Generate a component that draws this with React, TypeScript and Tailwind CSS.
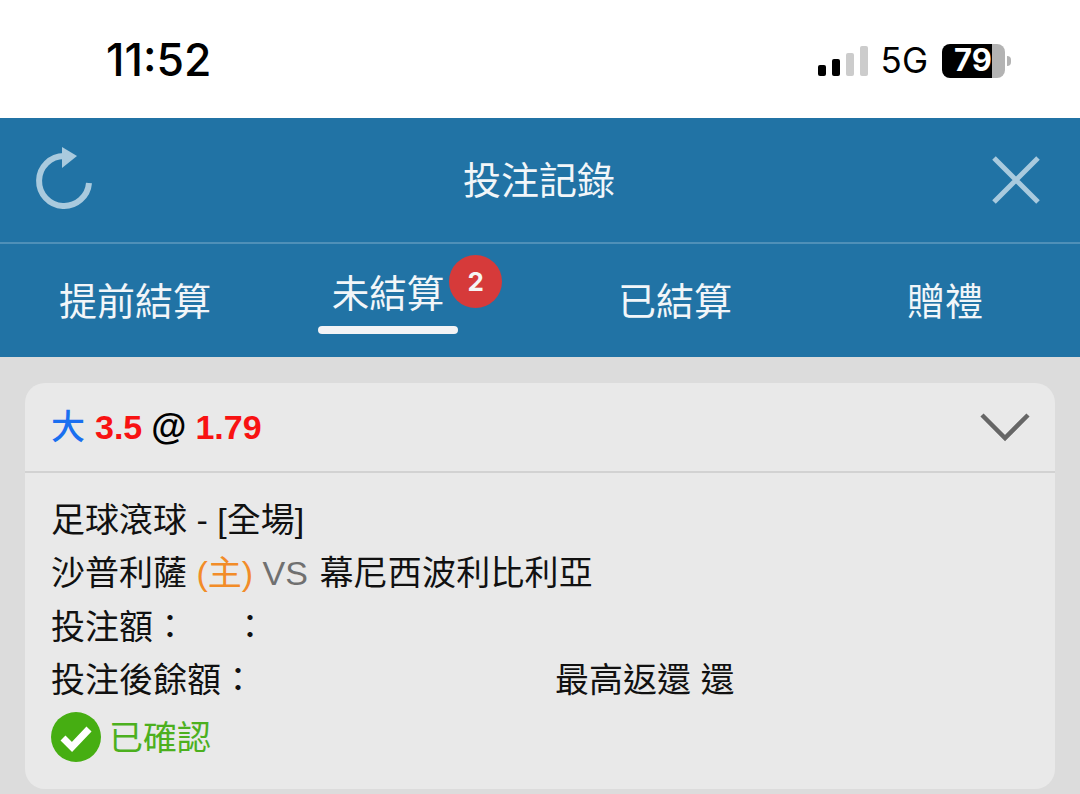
import React from 'react';

const tabs = ['提前結算', '未結算', '已結算', '贈禮'];

const SignalBars = () => (
  <div className="flex items-end gap-[6px] h-[30px]">
    <div className="w-[8px] h-[11px] rounded-[2px] bg-black" />
    <div className="w-[8px] h-[17px] rounded-[2px] bg-black" />
    <div className="w-[8px] h-[23px] rounded-[2px] bg-[#cccccc]" />
    <div className="w-[8px] h-[30px] rounded-[2px] bg-[#cccccc]" />
  </div>
);

const Battery = () => (
  <div className="flex items-center">
    <div className="relative flex w-[63px] h-[34px]">
      <div className="w-[50px] h-full rounded-l-[8px] bg-black" />
      <div className="w-[13px] h-full rounded-r-[8px] bg-[#b3b3b3]" />
      <span className="absolute left-[12px] top-0 h-full flex items-center font-['Inter',sans-serif] text-[31px] font-bold text-white">
        79
      </span>
    </div>
    <div className="ml-[2px] w-[4px] h-[10px] rounded-r-full bg-[#b3b3b3]" />
  </div>
);

export default function App() {
  return (
    <div className="w-[1080px] h-[794px] overflow-hidden bg-[#dcdcdc] font-['Inter','Noto_Sans_CJK_TC',sans-serif]">
      {/* Status bar */}
      <div className="h-[118px] bg-white flex items-center justify-between pl-[106px] pr-[69px] pt-[3px]">
        <span className="text-[44.5px] font-medium text-black">11:52</span>
        <div className="flex items-center">
          <SignalBars />
          <span className="ml-[13px] mr-[14px] text-[35px] text-black">5G</span>
          <Battery />
        </div>
      </div>

      {/* Header */}
      <div className="h-[126px] bg-[#2173a5] border-b-2 border-[#4f90b8] flex items-center justify-between pl-[34px] pr-[40px]">
        <svg width="60" height="66" viewBox="0 0 60 66" fill="none">
          <path d="M30 9 A25 25 0 1 0 55 36" stroke="#a9cade" strokeWidth="6" />
          <path d="M28 0 L43 9 L28 21 Z" fill="#a9cade" />
        </svg>
        <span className="text-[38px] text-[#f2f6f9]">投注記錄</span>
        <div className="w-[56px] flex justify-end">
          <svg width="48" height="48" viewBox="0 0 48 48" fill="none">
            <path d="M2 2 L46 46 M46 2 L2 46" stroke="#a9cade" strokeWidth="5" />
          </svg>
        </div>
      </div>

      {/* Tabs */}
      <div className="h-[113px] bg-[#2173a5] grid grid-cols-4">
        {tabs.map((tab, i) =>
          i === 1 ? (
            <div key={tab} className="flex flex-col items-center pt-[22px] pr-[34px]">
              <div className="relative">
                <span className="text-[37.5px] leading-[56px] text-[#f2f6f9]">{tab}</span>
                <span className="absolute -top-[11px] -right-[58px] w-[53px] h-[53px] rounded-full bg-[#d63a3a] flex items-center justify-center text-[26px] font-bold text-[#f5f5f5]">
                  2
                </span>
              </div>
              <div className="mt-[4px] w-[140px] h-[8px] rounded-full bg-[#f3f3f5]" />
            </div>
          ) : (
            <div key={tab} className="flex items-center justify-center pt-[2px]">
              <span className="text-[38px] text-[#f2f6f9]">{tab}</span>
            </div>
          )
        )}
      </div>

      {/* Bet card */}
      <div className="px-[25px] pt-[26px]">
        <div className="h-[406px] rounded-[20px] bg-[#e9e9e9] overflow-hidden font-['Liberation_Sans','Noto_Sans_CJK_TC',sans-serif]">
          <div className="h-[90px] border-b-2 border-[#d2d2d2] flex items-center justify-between pl-[26px] pr-[25px]">
            <div className="flex items-center text-[34px]">
              <span className="font-medium text-[#1a6ff0]">大</span>
              <span className="ml-[10px] font-bold text-[#f81212]">3.5</span>
              <span className="ml-[9px] text-[36px] font-bold text-black">@</span>
              <span className="ml-[9px] font-bold text-[#f81212]">1.79</span>
            </div>
            <svg width="50" height="30" viewBox="0 0 50 30" fill="none">
              <path d="M2 3 L25 26 L48 3" stroke="#666666" strokeWidth="4.5" />
            </svg>
          </div>

          <div className="pl-[26px] pt-[21px] text-[34px] leading-[53.4px] text-[#111111]">
            <div>足球滾球 - [全場]</div>
            <div>
              沙普利薩 <span className="text-[#f28c28]">(主)</span> <span className="mr-[2px] text-[#707070]">VS</span> <span className="tracking-[0.2px]">幕尼西波利比利亞</span>
            </div>
            <div className="flex">
              <span className="w-[182px]">投注額：</span>
              <span>：</span>
            </div>
            <div className="flex">
              <span className="w-[504px]">投注後餘額：</span>
              <span>最高返還 還</span>
            </div>
            <div className="flex items-center mt-[1px]">
              <svg width="50" height="50" viewBox="0 0 50 50">
                <circle cx="25" cy="25" r="25" fill="#46ae12" />
                <path d="M12 26 L21 35 L38 17" fill="none" stroke="#ffffff" strokeWidth="7" />
              </svg>
              <span className="ml-[8px] pt-[3px] text-[#4cb01e]">已確認</span>
            </div>
          </div>
        </div>
      </div>
    </div>
  );
}
